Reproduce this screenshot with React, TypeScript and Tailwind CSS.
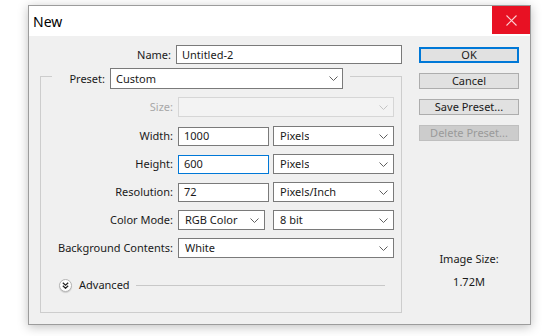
import React from "react";

function Chevron({ light = false }: { light?: boolean }) {
  return (
    <svg width="9" height="5" viewBox="0 0 9 5" className="shrink-0">
      <polyline
        points="0.5,0.5 4.5,4.5 8.5,0.5"
        fill="none"
        stroke={light ? "#c4c4c4" : "#606060"}
        strokeWidth="1"
      />
    </svg>
  );
}

function Select({
  value,
  width,
  disabled = false,
}: {
  value: string;
  width: string;
  disabled?: boolean;
}) {
  return (
    <div
      className={`${width} h-[20px] flex items-center justify-between pl-[6px] pr-[5px] border ${
        disabled ? "border-[#d6d6d6] bg-[#f3f3f3]" : "border-[#7a7a7a] bg-white"
      }`}
    >
      <span className="truncate">{value}</span>
      <Chevron light={disabled} />
    </div>
  );
}

function Input({ value, width, focused = false }: { value: string; width: string; focused?: boolean }) {
  return (
    <div
      className={`${width} h-[19px] flex items-center pl-[5px] bg-white border ${
        focused ? "border-[#0078d7]" : "border-[#7a7a7a]"
      }`}
    >
      {value}
    </div>
  );
}

function Row({ label, children, disabled = false, top = "mt-[8px]" }: { label: string; children: React.ReactNode; disabled?: boolean; top?: string }) {
  return (
    <div className={`flex items-center h-[20px] ${top}`}>
      <div className={`w-[132px] text-right ${disabled ? "text-[#a8a8a8]" : ""}`}>{label}</div>
      <div className="ml-[5px] flex items-center">{children}</div>
    </div>
  );
}

function Button({ label, primary = false, disabled = false }: { label: string; primary?: boolean; disabled?: boolean }) {
  return (
    <div
      className={`w-[100px] h-[16px] flex items-center justify-center border ${
        primary
          ? "border-[#0078d7] bg-[#e1e1e1] shadow-[inset_0_0_0_1px_#0078d7]"
          : disabled
          ? "border-[#bfbfbf] bg-[#cccccc] text-[#9a9a9a]"
          : "border-[#adadad] bg-[#e1e1e1]"
      }`}
    >
      {label}
    </div>
  );
}

export default function App() {
  return (
    <div
      className="w-[560px] h-[336px] bg-white pt-[5px] pl-[28px] text-[11px] text-[#1a1a1a] leading-[16px]"
      style={{ fontFamily: '"Noto Sans", "Open Sans", sans-serif' }}
    >
      <div className="w-[503px] h-[320px] border border-[#9c9c9c] bg-[#f0f0f0] flex flex-col shadow-[0_2px_10px_rgba(0,0,0,0.25)]">
        {/* title bar */}
        <div className="h-[30px] bg-white flex justify-between items-start">
          <div className="pl-[4px] pt-[6px] text-[14px] leading-[20px] text-black">New</div>
          <div className="w-[38px] h-[28px] bg-[#e81123] flex items-center justify-center">
            <svg width="11" height="11" viewBox="0 0 11 11">
              <path d="M0.5 0.5 L10.5 10.5 M10.5 0.5 L0.5 10.5" stroke="#fbd0d3" strokeWidth="1.1" />
            </svg>
          </div>
        </div>

        {/* body */}
        <div className="flex-1 flex pt-[9px]">
          <div className="w-[373px]">
            <div className="flex items-center h-[19px]">
              <div className="w-[144px] text-right">Name:</div>
              <div className="ml-[5px]">
                <Input value="Untitled-2" width="w-[226px]" />
              </div>
            </div>

            <div className="ml-[11px] mt-[12px] w-[362px] h-[237px] border border-[#cdcdcd]">
              <div className="-mt-[9px] ml-[11px] w-[298px] h-[21px] flex items-center bg-[#f0f0f0]">
                <div className="w-[53px] text-right">Preset:</div>
                <div className="ml-[5px] w-[233px] h-[21px] flex items-center justify-between pl-[5px] pr-[4px] bg-white border border-[#7a7a7a]">
                  <span>Custom</span>
                  <Chevron />
                </div>
              </div>

              <Row label="Size:" disabled>
                <Select value="" width="w-[216px]" disabled />
              </Row>
              <Row label="Width:" top="mt-[9px]">
                <Input value="1000" width="w-[91px]" />
                <div className="ml-[4px]">
                  <Select value="Pixels" width="w-[121px]" />
                </div>
              </Row>
              <Row label="Height:">
                <Input value="600" width="w-[91px]" focused />
                <div className="ml-[4px]">
                  <Select value="Pixels" width="w-[121px]" />
                </div>
              </Row>
              <Row label="Resolution:">
                <Input value="72" width="w-[91px]" />
                <div className="ml-[4px]">
                  <Select value="Pixels/Inch" width="w-[121px]" />
                </div>
              </Row>
              <Row label="Color Mode:">
                <Select value="RGB Color" width="w-[87px]" />
                <div className="ml-[8px]">
                  <Select value="8 bit" width="w-[121px]" />
                </div>
              </Row>
              <Row label="Background Contents:">
                <Select value="White" width="w-[216px]" />
              </Row>

              <div className="mt-[20px] h-[14px] flex items-center">
                <div className="ml-[18px] w-[13px] h-[13px] rounded-full bg-white border border-[#b4b4b4] shadow-[0_1px_1px_rgba(0,0,0,0.15)] flex items-center justify-center">
                  <svg width="7" height="7" viewBox="0 0 7 7">
                    <polyline points="0.8,0.8 3.5,3.3 6.2,0.8" fill="none" stroke="#222" strokeWidth="1.2" />
                    <polyline points="0.8,3.8 3.5,6.3 6.2,3.8" fill="none" stroke="#222" strokeWidth="1.2" />
                  </svg>
                </div>
                <span className="ml-[7px]">Advanced</span>
                <div className="flex-1 ml-[6px] mr-[16px] h-px bg-[#c8c8c8]" />
              </div>
            </div>
          </div>

          <div className="ml-[17px] mt-[2px] w-[100px] flex flex-col items-center">
            <Button label="OK" primary />
            <div className="mt-[10px]">
              <Button label="Cancel" />
            </div>
            <div className="mt-[10px]">
              <Button label="Save Preset..." />
            </div>
            <div className="mt-[10px]">
              <Button label="Delete Preset..." disabled />
            </div>
            <div className="mt-[110px]">Image Size:</div>
            <div className="mt-[7px]">1.72M</div>
          </div>
        </div>
      </div>
    </div>
  );
}
